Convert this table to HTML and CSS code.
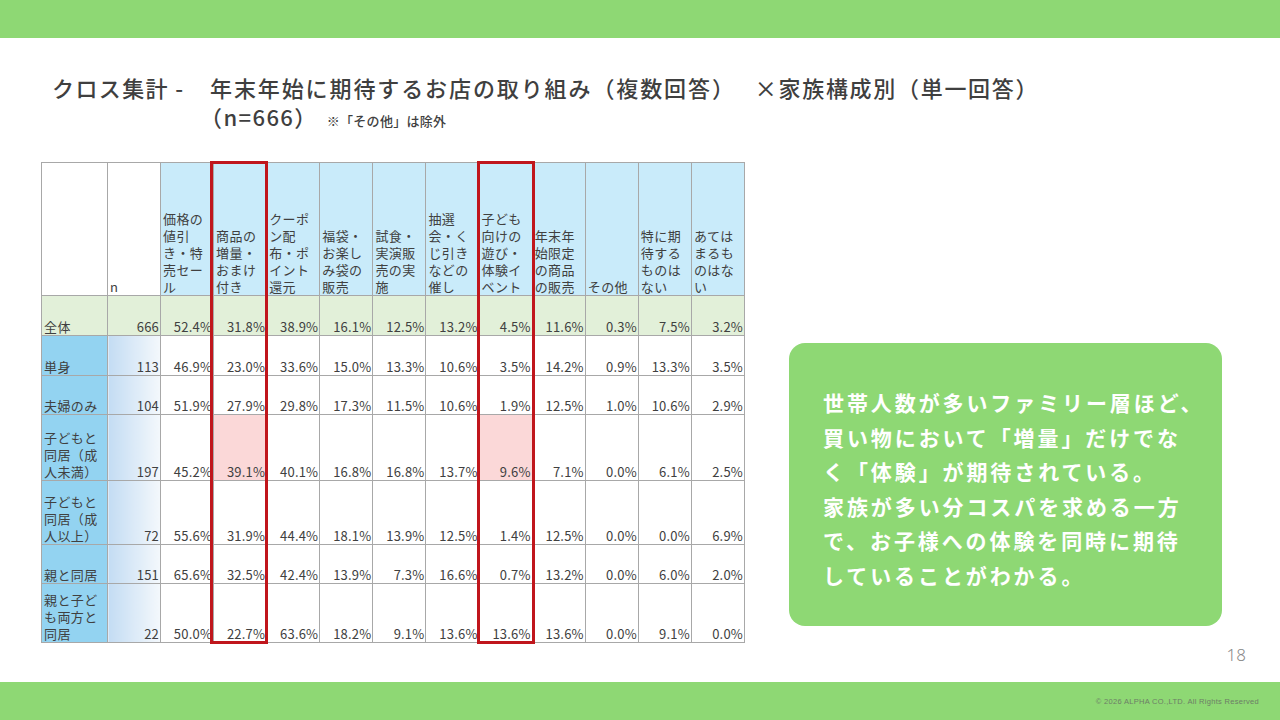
FILE: index.html
```html
<!DOCTYPE html>
<html lang="ja">
<head>
<meta charset="utf-8">
<title>クロス集計</title>
<link rel="stylesheet" href="styles.css">
</head>
<body class="slide">
<div class="topbar"></div>
<main class="main">
  <h1 class="title">
    <span class="title-lead">クロス集計 -</span>
    <span class="title-body">
      <span class="title-line">年末年始に期待するお店の取り組み（複数回答）<span class="title-gap"></span><span class="title-tail">×家族構成別（単一回答）</span></span>
      <span class="title-line title-line2">（n=666）<span class="title-note">※「その他」は除外</span></span>
    </span>
  </h1>
  <div class="content">
    <div class="table-wrap">
      <table class="data">
        <colgroup>
          <col class="c-label"><col class="c-n">
          <col class="c-val"><col class="c-val"><col class="c-val"><col class="c-val"><col class="c-val"><col class="c-val"><col class="c-val"><col class="c-val"><col class="c-val"><col class="c-val"><col class="c-val">
        </colgroup>
        <thead>
          <tr class="r-head">
            <th class="h-blank"></th>
            <th class="h-blank">n</th>
            <th>価格の<br>値引<br>き・特<br>売セー<br>ル</th>
            <th>商品の<br>増量・<br>おまけ<br>付き</th>
            <th>クーポ<br>ン配<br>布・ポ<br>イント<br>還元</th>
            <th>福袋・<br>お楽し<br>み袋の<br>販売</th>
            <th>試食・<br>実演販<br>売の実<br>施</th>
            <th>抽選<br>会・く<br>じ引き<br>などの<br>催し</th>
            <th>子ども<br>向けの<br>遊び・<br>体験イ<br>ベント</th>
            <th>年末年<br>始限定<br>の商品<br>の販売</th>
            <th>その他</th>
            <th>特に期<br>待する<br>ものは<br>ない</th>
            <th>あては<br>まるも<br>のはな<br>い</th>
          </tr>
        </thead>
        <tbody>
          <tr class="r-total">
            <td>全体</td><td class="num">666</td>
            <td class="num">52.4%</td><td class="num">31.8%</td><td class="num">38.9%</td><td class="num">16.1%</td><td class="num">12.5%</td><td class="num">13.2%</td><td class="num">4.5%</td><td class="num">11.6%</td><td class="num">0.3%</td><td class="num">7.5%</td><td class="num">3.2%</td>
          </tr>
          <tr class="r-40">
            <td class="lbl">単身</td><td class="num ncol">113</td>
            <td class="num">46.9%</td><td class="num">23.0%</td><td class="num">33.6%</td><td class="num">15.0%</td><td class="num">13.3%</td><td class="num">10.6%</td><td class="num">3.5%</td><td class="num">14.2%</td><td class="num">0.9%</td><td class="num">13.3%</td><td class="num">3.5%</td>
          </tr>
          <tr class="r-39">
            <td class="lbl">夫婦のみ</td><td class="num ncol">104</td>
            <td class="num">51.9%</td><td class="num">27.9%</td><td class="num">29.8%</td><td class="num">17.3%</td><td class="num">11.5%</td><td class="num">10.6%</td><td class="num">1.9%</td><td class="num">12.5%</td><td class="num">1.0%</td><td class="num">10.6%</td><td class="num">2.9%</td>
          </tr>
          <tr class="r-66">
            <td class="lbl">子どもと<br>同居（成<br>人未満）</td><td class="num ncol">197</td>
            <td class="num">45.2%</td><td class="num hl">39.1%</td><td class="num">40.1%</td><td class="num">16.8%</td><td class="num">16.8%</td><td class="num">13.7%</td><td class="num hl">9.6%</td><td class="num">7.1%</td><td class="num">0.0%</td><td class="num">6.1%</td><td class="num">2.5%</td>
          </tr>
          <tr class="r-64">
            <td class="lbl">子どもと<br>同居（成<br>人以上）</td><td class="num ncol">72</td>
            <td class="num">55.6%</td><td class="num">31.9%</td><td class="num">44.4%</td><td class="num">18.1%</td><td class="num">13.9%</td><td class="num">12.5%</td><td class="num">1.4%</td><td class="num">12.5%</td><td class="num">0.0%</td><td class="num">0.0%</td><td class="num">6.9%</td>
          </tr>
          <tr class="r-39">
            <td class="lbl">親と同居</td><td class="num ncol">151</td>
            <td class="num">65.6%</td><td class="num">32.5%</td><td class="num">42.4%</td><td class="num">13.9%</td><td class="num">7.3%</td><td class="num">16.6%</td><td class="num">0.7%</td><td class="num">13.2%</td><td class="num">0.0%</td><td class="num">6.0%</td><td class="num">2.0%</td>
          </tr>
          <tr class="r-59">
            <td class="lbl">親と子ど<br>も両方と<br>同居</td><td class="num ncol">22</td>
            <td class="num">50.0%</td><td class="num">22.7%</td><td class="num">63.6%</td><td class="num">18.2%</td><td class="num">9.1%</td><td class="num">13.6%</td><td class="num">13.6%</td><td class="num">13.6%</td><td class="num">0.0%</td><td class="num">9.1%</td><td class="num">0.0%</td>
          </tr>
        </tbody>
      </table>
      <div class="redbox redbox-1"></div>
      <div class="redbox redbox-2"></div>
    </div>
    <div class="note">世帯人数が多いファミリー層ほど、<br>買い物において「増量」だけでな<br>く「体験」が期待されている。<br>家族が多い分コスパを求める一方<br>で、お子様への体験を同時に期待<br>していることがわかる。</div>
  </div>
  <div class="pagenum">18</div>
</main>
<footer class="bottombar"><span>© 2026 ALPHA CO.,LTD. All Rights Reserved</span></footer>
</body>
</html>
```
FILE: styles.css
```css
* { box-sizing: border-box; }
html, body { margin: 0; padding: 0; }
.slide {
  width: 1280px;
  height: 720px;
  overflow: hidden;
  display: flex;
  flex-direction: column;
  background: #ffffff;
  font-family: "Noto Sans CJK JP", "Noto Sans", sans-serif;
  color: #404040;
}
.topbar { height: 38px; flex: none; background: #8ed874; }
.main {
  flex: 1;
  min-height: 0;
  display: flex;
  flex-direction: column;
  padding: 35px 0 0 41px;
}
.title {
  margin: 0 0 0 11px;
  display: flex;
  font-size: 22px;
  font-weight: 500;
  line-height: 29px;
  letter-spacing: 1.9px;
  color: #3f3f3f;
}
.title-lead { width: 158px; flex: none; letter-spacing: 1.4px; }
.title-body { display: flex; flex-direction: column; }
.title-line { display: block; height: 29px; white-space: nowrap; }
.title-gap { display: inline-block; width: 19px; }
.title-tail { letter-spacing: 1.7px; }
.title-line2 { margin-left: -10px; letter-spacing: 1.4px; }
.title-note { font-size: 13px; letter-spacing: 0.3px; margin-left: 9px; }
.content {
  display: flex;
  align-items: flex-start;
  gap: 44px;
  margin-top: 31px;
}
.table-wrap { position: relative; flex: none; }
.data {
  border-collapse: collapse;
  table-layout: fixed;
  width: 703px;
  font-size: 13px;
  line-height: 17px;
  letter-spacing: 0.4px;
  color: #404040;
}
.c-label { width: 66px; }
.c-n { width: 53px; }
.c-val { width: 53.1px; }
.data th, .data td {
  border: 1px solid #a8a8a8;
  padding: 0 1px 0 2px;
  vertical-align: bottom;
  white-space: nowrap;
  font-weight: 400;
  text-align: left;
  overflow: hidden;
}
.data th { background: #c9ebfa; }
.data th.h-blank { background: #ffffff; }
.data td.num { text-align: right; letter-spacing: 0.2px; }
.r-head { height: 133px; }
.r-total { height: 40px; }
.r-total td { background: #e2f0d9; }
.r-40 { height: 40px; }
.r-39 { height: 39px; }
.r-66 { height: 66px; }
.r-64 { height: 64px; }
.r-59 { height: 59px; }
.data td.lbl { background: #93d3f1; }
.data td.ncol { background: linear-gradient(90deg, #c3dcf3, #f4f8fc); }
.data td.hl { background: #fbd8d8; }
.redbox {
  position: absolute;
  top: -1px;
  width: 58px;
  height: 483px;
  border: 3px solid #c0161c;
  pointer-events: none;
}
.redbox-1 { left: 169px; }
.redbox-2 { left: 436px; }
.note {
  margin-top: 181px;
  width: 433px;
  height: 283px;
  flex: none;
  background: #8ed874;
  border-radius: 16px;
  color: #ffffff;
  font-weight: 700;
  font-size: 21px;
  line-height: 34.5px;
  letter-spacing: 2.9px;
  padding: 42px 0 0 34px;
  white-space: nowrap;
}
.pagenum {
  margin-top: auto;
  align-self: flex-end;
  margin-right: 34px;
  margin-bottom: 17px;
  font-family: "Noto Sans", sans-serif;
  font-size: 17px;
  font-weight: 300;
  line-height: 20px;
  color: #8a8a8a;
}
.bottombar {
  height: 38px;
  flex: none;
  background: #8ed874;
  display: flex;
  align-items: center;
  justify-content: flex-end;
  padding-right: 21px;
  font-family: "Liberation Sans", sans-serif;
  font-size: 7.5px;
  letter-spacing: 0.3px;
  color: #6d7d67;
}
```
